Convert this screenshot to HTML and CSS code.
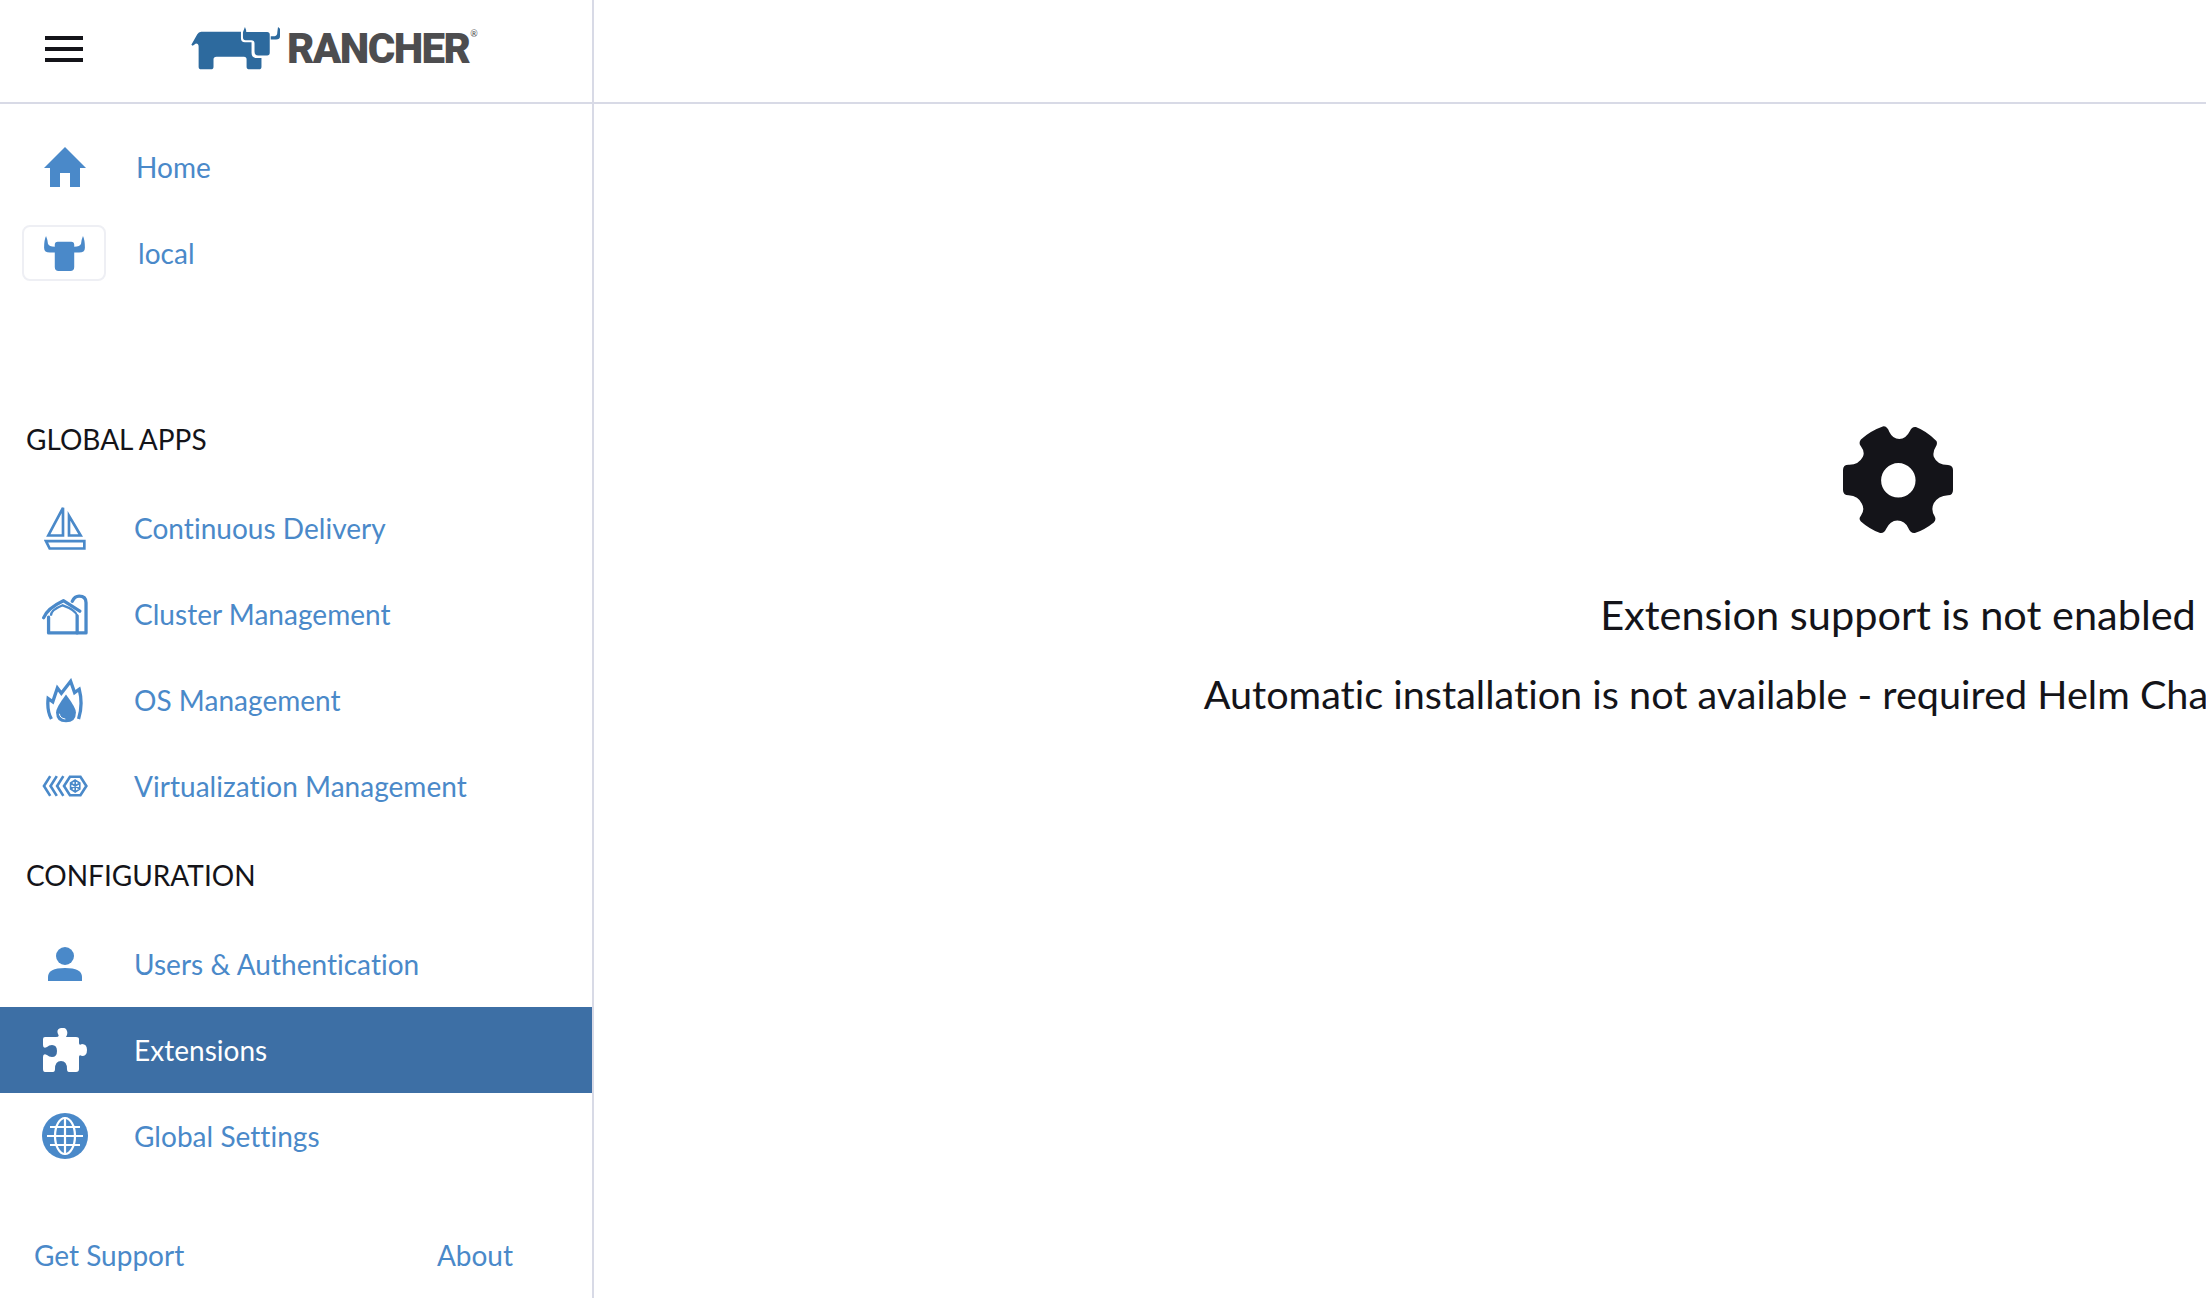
FILE: index.html
```html
<!DOCTYPE html>
<html>
<head>
    <title>Rancher</title>
    <link rel="stylesheet" href="styles.css">
</head>
<body>
    <div class="sidebar">
        <div class="menu-header">
            <svg class="burger" viewBox="0 0 38 26"><path d="M0 2h38M0 13h38M0 24h38" stroke="#141419" stroke-width="4" fill="none"/></svg>
            <div class="logo">
                <svg class="logo-bull" viewBox="66 50 270 130">
                    <path fill="#2d6a9e" d="M66 104L84 72Q88 64 96 64H216V84Q216 96 228 96H248V128Q248 144 264 144H278V170Q278 178 270 178H242Q233 178 233 170V148Q233 140 225 140H142Q133 140 133 148V170Q133 178 125 178H96Q88 178 88 170V110Q88 100 80 100L70 107Z"/>
                    <path fill="#2d6a9e" d="M228 50Q232 58 232 65H295Q303 65 303 73V128Q303 136 295 136H268Q257 136 257 125V100Q257 90 247 90H230Q222 90 222 80V66Z"/>
                    <path fill="#2d6a9e" d="M328 50L334 55V78Q334 88 322 88H306V78H318Q326 76 326 65Z"/>
                </svg>
                <span class="logo-text">RANCHER</span><span class="logo-reg">®</span>
            </div>
        </div>

        <div class="top-links">
            <a class="nav-row home-row">
                <span class="nav-icon">
                    <svg width="42" height="40" viewBox="0 0 42 40"><path fill="currentColor" d="M21 0L42 21H36V40H26V26H16V40H6V21H0Z"/></svg>
                </span>
                Home
            </a>
            <a class="nav-row local-row">
                <span class="cluster-box">
                    <svg width="41" height="35" viewBox="0 0 42 36"><path fill="currentColor" d="M2 0Q4 5 4 8Q5 11 11 11V9Q11 6 14 6H28Q31 6 31 9V11Q37 11 38 8Q38 5 40 0Q42 4 42 12Q42 17 36 17H31V32Q31 36 27 36H15Q11 36 11 32V17H6Q0 17 0 12Q0 4 2 0Z"/></svg>
                </span>
                local
            </a>
        </div>

        <h4 class="group-title global-title">GLOBAL APPS</h4>
        <a class="nav-row">
            <span class="nav-icon icon-up">
                <svg width="42" height="47" viewBox="133 38 126 140"><g fill="none" stroke="currentColor" stroke-width="8"><path d="M190 52L146 135H190ZM208 76V135H243Z"/><path d="M139 152H254V174H150Z"/></g></svg>
            </span>
            Continuous Delivery
        </a>
        <a class="nav-row">
            <span class="nav-icon">
                <svg width="46" height="41" viewBox="125 306 140 124"><g fill="none" stroke="currentColor" stroke-width="10" stroke-linejoin="round" stroke-linecap="round"><path d="M145 376V424H259V332Q259 312 238 312Q224 312 217 328"/><path d="M130 378Q140 350 190 326L240 358"/><path d="M232 372V424"/></g><path fill="none" stroke="currentColor" stroke-width="7" d="M152 372Q152 354 188 340Q228 354 232 372"/></svg>
            </span>
            Cluster Management
        </a>
        <a class="nav-row">
            <span class="nav-icon">
                <svg width="40" height="45" viewBox="135 560 120 136"><path fill="none" stroke="currentColor" stroke-width="10" d="M154 684Q140 660 144 622L158 632L172 590L184 606L212 570L224 604L238 594Q250 640 236 684"/><path fill="currentColor" d="M198 610Q228 650 228 664Q228 694 198 694Q168 694 168 664Q168 650 198 610Z"/><path fill="none" stroke="#fff" stroke-width="3" d="M178 668Q180 682 196 684"/></svg>
            </span>
            OS Management
        </a>
        <a class="nav-row">
            <span class="nav-icon">
                <svg width="46" height="22" viewBox="125 853 140 66"><g fill="none" stroke="currentColor" stroke-width="8"><path d="M150 856L131 886L150 916M170 856L151 886L170 916M190 856L171 886L190 916"/><path d="M210 858H242L260 886L242 914H210L192 886Z"/><path stroke-width="5" d="M226 868L240 877V895L226 904L212 895V877ZM226 868V904M212 877L240 895M240 877L212 895"/></g></svg>
            </span>
            Virtualization Management
        </a>

        <h4 class="group-title config-title">CONFIGURATION</h4>
        <a class="nav-row">
            <span class="nav-icon">
                <svg width="34" height="34" viewBox="0 0 34 34"><circle cx="17" cy="9" r="9" fill="currentColor"/><path fill="currentColor" d="M0 34V30Q0 21 17 21Q34 21 34 30V34Z"/></svg>
            </span>
            Users &amp; Authentication
        </a>
        <a class="nav-row active">
            <span class="nav-icon">
                <svg width="44" height="44" viewBox="0 0 44 44"><path fill="currentColor" d="M2 44Q0 44 0 41V29Q0 25 4 27Q6 29 9 29Q14 29 14 23Q14 17 9 17Q6 17 4 19Q0 21 0 17V11Q0 9 2 9H13Q17 9 15 6Q13 1 18 0Q23 -1 24 3Q25 6 23 9H33Q36 9 36 11V15Q36 18 39 16Q44 16 44 22Q44 28 39 28Q36 26 36 29V41Q36 44 33 44H26Q24 44 24 41Q24 33 18 33Q12 33 12 41Q12 44 10 44Z"/></svg>
            </span>
            Extensions
        </a>
        <a class="nav-row">
            <span class="nav-icon">
                <svg width="46" height="46" viewBox="0 0 46 46"><circle cx="23" cy="23" r="23" fill="currentColor"/><g fill="none" stroke="#fff" stroke-width="2.2"><ellipse cx="23" cy="23" rx="10" ry="18"/><path d="M23 4V42M8 14H38M5 23H41M8 32H38"/></g></svg>
            </span>
            Global Settings
        </a>

        <div class="menu-footer">
            <a>Get Support</a>
            <a>About</a>
        </div>
    </div>

    <div class="main">
        <div class="main-header"></div>
        <div class="empty">
            <svg class="gear" viewBox="188 78 332 324"><path fill="#141419" fill-rule="evenodd" d="M310 78Q322 78 328 95Q338 116 358 116Q378 116 390 92Q396 78 408 80Q440 92 470 122Q474 130 468 140Q458 155 462 170Q472 195 505 195Q520 196 520 210V270Q520 286 505 286Q475 288 462 310Q452 330 465 350Q470 360 462 368Q435 390 405 400Q392 402 385 385Q375 362 352 362Q330 362 318 388Q312 402 300 400Q268 388 242 365Q234 358 242 348Q255 330 245 312Q235 288 205 286Q188 286 188 270V210Q188 194 205 194Q235 195 248 170Q255 155 242 138Q234 128 242 118Q270 92 310 78ZM355 189A52 52 0 1 0 355 293A52 52 0 1 0 355 189Z"/></svg>
            <h1 class="empty-title">Extension support is not enabled</h1>
            <h2 class="empty-text">Automatic installation is not available - required Helm Charts could not be found</h2>
        </div>
    </div>
</body>
</html>
```

FILE: styles.css
```css
html, body {
    margin: 0;
    height: 100%;
    overflow: hidden;
}
body {
    display: flex;
    background: #fff;
    font-family: Lato, "Open Sans", sans-serif;
    font-variant-ligatures: none;
    color: #141419;
}
.sidebar {
    width: 592px;
    flex: none;
    display: flex;
    flex-direction: column;
    border-right: 2px solid #d8dae6;
}
.menu-header {
    height: 97px;
    padding-bottom: 5px;
    flex: none;
    display: flex;
    align-items: center;
    border-bottom: 2px solid #d8dae6;
}
.burger {
    width: 38px;
    height: 26px;
    margin: 0 0 0 45px;
}
.logo {
    display: flex;
    align-items: center;
    margin-left: 108px;
    color: #4d4d4f;
}
.logo-bull {
    width: 90px;
    height: 43px;
}
.logo-text {
    margin-left: 6px;
    font-family: Roboto, sans-serif;
    font-weight: 900;
    font-size: 42px;
    line-height: 43px;
    letter-spacing: -1.6px;
}
.logo-reg {
    align-self: flex-start;
    font-size: 9px;
    line-height: 14px;
    margin-left: 1px;
}
.top-links {
    padding-top: 20px;
    margin-bottom: 97px;
}
.nav-row {
    display: flex;
    align-items: center;
    height: 86px;
    flex: none;
    font-size: 28px;
    letter-spacing: 0.03px;
    color: #4a89c9;
    cursor: pointer;
}
.nav-row.active {
    background: #3d6fa5;
    color: #fff;
}
.nav-icon {
    width: 50px;
    margin: 0 44px 0 40px;
    display: flex;
    justify-content: center;
    align-items: center;
}
.icon-up {
    padding-bottom: 4px;
}
.home-row .nav-icon {
    margin-right: 46px;
}
.cluster-box {
    width: 80px;
    height: 52px;
    margin: 0 32px 0 22px;
    border: 2px solid #eeeff4;
    border-radius: 8px;
    display: flex;
    justify-content: center;
    align-items: center;
}
.group-title {
    height: 91px;
    margin: 0;
    padding-left: 26px;
    flex: none;
    display: flex;
    align-items: center;
    font-size: 28px;
    font-weight: 400;
}
.global-title + .nav-row {
    margin-top: 1px;
}
.config-title {
    height: 92px;
}
.menu-footer {
    margin-top: auto;
    height: 86px;
    padding: 0 79px 0 34px;
    display: flex;
    justify-content: space-between;
    align-items: center;
    font-size: 28px;
    color: #4a89c9;
}
.main {
    flex: 1;
    min-width: 0;
    overflow: hidden;
}
.main-header {
    height: 102px;
    border-bottom: 2px solid #d8dae6;
}
.empty {
    width: 2608px;
    padding-top: 322px;
    display: flex;
    flex-direction: column;
    align-items: center;
}
.gear {
    width: 110px;
    height: 108px;
}
.empty-title {
    margin: 54px 0 0;
    font-size: 41.5px;
    line-height: 52px;
    font-weight: 400;
}
.empty-text {
    margin: 28px 0 0;
    font-size: 39.6px;
    line-height: 52px;
    font-weight: 400;
    white-space: nowrap;
}
```
